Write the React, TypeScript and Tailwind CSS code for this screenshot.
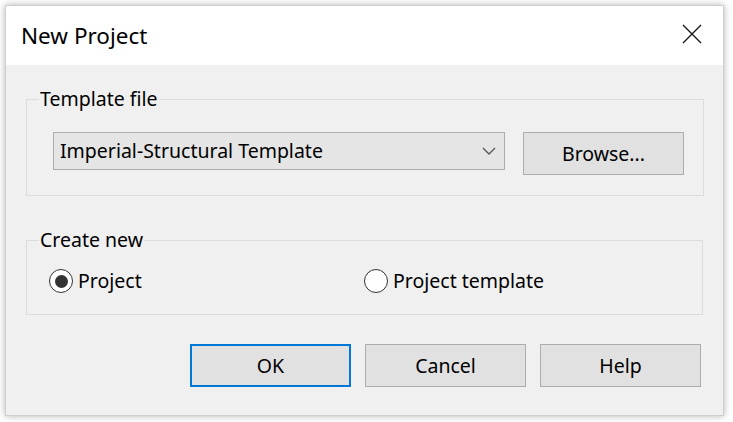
import React from 'react';

const font = { fontFamily: '"Noto Sans", "Open Sans", Arial, sans-serif' };

function Radio({ checked, label }: { checked?: boolean; label: string }) {
  return (
    <label className="flex items-center gap-[5px] text-[19.5px] leading-[24px] text-black">
      <span className="flex h-[24px] w-[24px] items-center justify-center rounded-full border-[1.5px] border-[#333333] bg-white">
        {checked && <span className="h-[13px] w-[13px] rounded-full bg-[#333333]" />}
      </span>
      {label}
    </label>
  );
}

function Button({ children, primary }: { children: React.ReactNode; primary?: boolean }) {
  return (
    <button
      className={
        primary
          ? 'h-[43px] w-[161px] border-2 border-[#0078d7] bg-[#e1e1e1] text-[19.5px] text-black'
          : 'h-[43px] w-[161px] border border-[#adadad] bg-[#e1e1e1] text-[19.5px] text-black'
      }
    >
      {children}
    </button>
  );
}

export default function App() {
  return (
    <div className="h-[422px] w-[733px] bg-white pl-[5px] pt-[5px]" style={font}>
      <div className="flex h-[411px] w-[719px] flex-col border border-[#cfcfcf] bg-[#f0f0f0] shadow-[0_0_7px_rgba(0,0,0,0.3)]">
        {/* title bar */}
        <div className="flex h-[59px] items-center justify-between bg-white pl-[15px] pr-[21px]">
          <span className="text-[22.5px] text-black">New Project</span>
          <svg width="20" height="20" viewBox="0 0 20 20" className="mb-[4px]">
            <path d="M1 1 L19 19 M19 1 L1 19" stroke="#1a1a1a" strokeWidth="1.4" fill="none" />
          </svg>
        </div>

        <div className="flex flex-1 flex-col px-[20px] pt-[22px]">
          <fieldset className="border border-[#dcdcdc] pb-[20px] pl-[12px] pr-[19px]">
            <legend className="px-[1px] text-[19.5px] leading-[24px] text-black">Template file</legend>
            <div className="ml-[14px] mt-[21px] flex items-start gap-[18px]">
              <div className="flex h-[38px] w-[452px] items-center justify-between border border-[#acacac] bg-[#e5e5e5] pl-[6px] pr-[8px] text-[19.5px] text-black">
                <span>Imperial-Structural Template</span>
                <svg width="14" height="8" viewBox="0 0 14 8">
                  <path d="M1 1 L7 7 L13 1" stroke="#555555" strokeWidth="1.3" fill="none" />
                </svg>
              </div>
              <Button>Browse...</Button>
            </div>
          </fieldset>

          <fieldset className="mt-[32px] border border-[#dcdcdc] pb-[21px] pl-[12px]">
            <legend className="px-[1px] text-[19.5px] leading-[24px] text-black">Create new</legend>
            <div className="ml-[10px] mt-[17px] flex">
              <div className="w-[315px]">
                <Radio checked label="Project" />
              </div>
              <Radio label="Project template" />
            </div>
          </fieldset>

          <div className="mr-[2px] mt-[29px] flex justify-end gap-[14px]">
            <Button primary>OK</Button>
            <Button>Cancel</Button>
            <Button>Help</Button>
          </div>
        </div>
      </div>
    </div>
  );
}
